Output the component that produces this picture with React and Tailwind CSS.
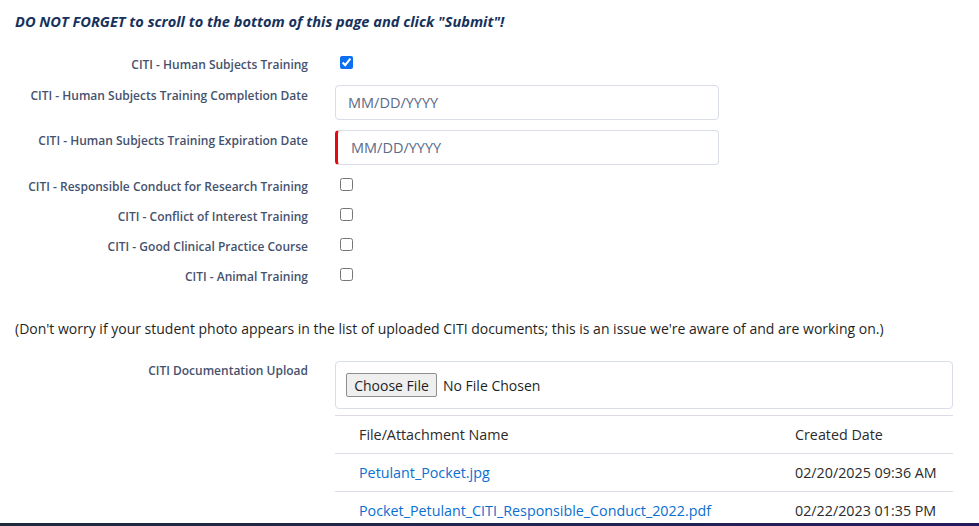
import React from "react";

const font = { fontFamily: "'Open Sans', 'Noto Sans', sans-serif" };

function Label({ children, pt }) {
  return (
    <div className={`w-[308px] shrink-0 text-right text-[12px] leading-[16px] font-semibold text-[#45526e] ${pt}`}>
      {children}
    </div>
  );
}

function CheckRow({ label, checked }) {
  return (
    <div className="flex h-[30px] items-start">
      <Label pt="pt-[4px]">{label}</Label>
      <div className="ml-[32px] mt-[3px] flex">
        <input
          type="checkbox"
          defaultChecked={checked}
          className="m-0 h-[13px] w-[13px] accent-[#0b6ff0]"
        />
      </div>
    </div>
  );
}

function DateRow({ label, error, mt }) {
  return (
    <div className={`flex items-start ${mt}`}>
      <Label pt="pt-[3px]">{label}</Label>
      <div
        className={`ml-[27px] flex h-[35px] w-[384px] items-center rounded-[4px] border border-[#d8dde6] bg-white text-[14.5px] text-[#5b6a86] ${
          error ? "border-l-[3px] border-l-[#e5080f] pl-[13px]" : "pl-[12px]"
        }`}
      >
        MM/DD/YYYY
      </div>
    </div>
  );
}

export default function App() {
  return (
    <div className="relative min-h-[526px] w-[979px] overflow-hidden bg-white" style={font}>
      <div className="pl-[15px] pt-[12px] text-[14.6px] leading-[18px] font-bold italic text-[#16325c]">
        DO NOT FORGET to scroll to the bottom of this page and click "Submit"!
      </div>

      <div className="mt-[22px] flex h-[30px] items-start">
        <Label pt="pt-[5px]">CITI - Human Subjects Training</Label>
        <div className="ml-[32px] mt-[4px] flex">
          <input type="checkbox" defaultChecked className="m-0 h-[13px] w-[13px] accent-[#0b6ff0]" />
        </div>
      </div>

      <DateRow label="CITI - Human Subjects Training Completion Date" mt="mt-[3px]" />
      <DateRow label="CITI - Human Subjects Training Expiration Date" error mt="mt-[10px]" />

      <div className="mt-[10px]">
        <CheckRow label="CITI - Responsible Conduct for Research Training" />
        <CheckRow label="CITI - Conflict of Interest Training" />
        <CheckRow label="CITI - Good Clinical Practice Course" />
        <CheckRow label="CITI - Animal Training" />
      </div>

      <div className="mt-[24px] pl-[15px] text-[14px] leading-[20px] text-[#1f1f1f]">
        (Don't worry if your student photo appears in the list of uploaded CITI documents; this is an issue we're aware of and are working on.)
      </div>

      <div className="mt-[22px] flex items-start">
        <Label pt="pt-[2px]">CITI Documentation Upload</Label>
        <div className="ml-[27px] w-[618px]">
          <div className="flex h-[48px] items-center rounded-[4px] border border-[#d8dde6] pl-[10px]">
            <div className="flex h-[24px] w-[91px] items-center justify-center rounded-[2px] border border-[#8f8f8f] bg-[#efefef] text-[14px] text-[#1f1f1f]">
              Choose File
            </div>
            <span className="ml-[6px] text-[14px] text-[#1f1f1f]">No File Chosen</span>
          </div>

          <div className="mt-[6px] border-t border-[#dddbe6] text-[14.3px] whitespace-nowrap">
            <div className="flex h-[38px] items-center border-b border-[#dddbe6] pl-[24px] text-[#2b2b2b]">
              <div className="w-[436px]">File/Attachment Name</div>
              <div>Created Date</div>
            </div>
            <div className="flex h-[38px] items-center border-b border-[#dddbe6] pl-[24px]">
              <div className="w-[436px] text-[#0a6fd0]">Petulant_Pocket.jpg</div>
              <div className="text-[#2b2b2b]">02/20/2025 09:36 AM</div>
            </div>
            <div className="flex h-[38px] items-center pl-[24px]">
              <div className="w-[436px] text-[#0a6fd0]">Pocket_Petulant_CITI_Responsible_Conduct_2022.pdf</div>
              <div className="text-[#2b2b2b]">02/22/2023 01:35 PM</div>
            </div>
          </div>
        </div>
      </div>

      <div className="fixed bottom-0 left-0 h-[3px] w-full bg-gradient-to-r from-[#1f2a3d] to-[#241b5e]" />
    </div>
  );
}
